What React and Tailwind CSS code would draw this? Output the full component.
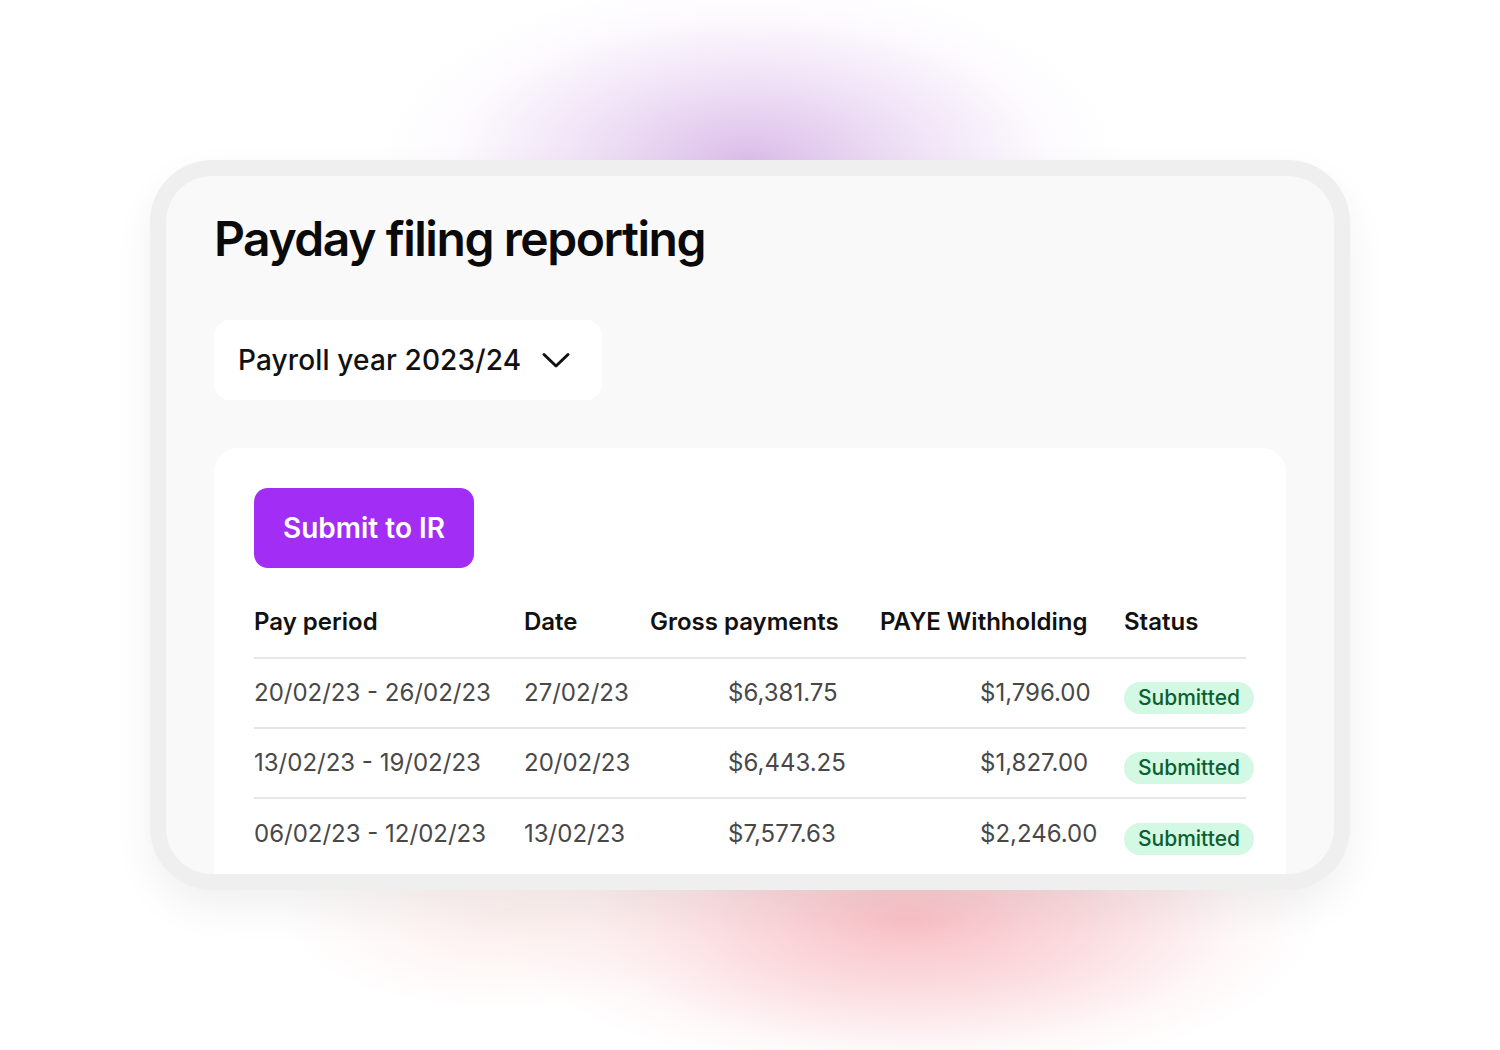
const rows = [
  { period: '20/02/23 - 26/02/23', date: '27/02/23', gross: '$6,381.75', paye: '$1,796.00' },
  { period: '13/02/23 - 19/02/23', date: '20/02/23', gross: '$6,443.25', paye: '$1,827.00' },
  { period: '06/02/23 - 12/02/23', date: '13/02/23', gross: '$7,577.63', paye: '$2,246.00' },
];

function Chevron() {
  return (
    <svg width="30" height="30" viewBox="0 0 30 30" fill="none">
      <path d="M3 9.5 L15 21 L27 9.5" stroke="#111" strokeWidth="3" strokeLinecap="round" strokeLinejoin="round" />
    </svg>
  );
}

export default function App() {
  return (
    <div className="relative w-full h-[1050px] overflow-hidden bg-white font-['Inter','Liberation_Sans',sans-serif]">
      {/* glows */}
      <div className="absolute left-[380px] top-[-20px] w-[740px] h-[360px] bg-[radial-gradient(closest-side,rgba(175,110,205,0.45),rgba(195,140,220,0.25)_45%,rgba(225,195,240,0.08)_80%,rgba(255,255,255,0))]" />
      <div className="absolute left-[500px] top-[760px] w-[820px] h-[320px] bg-[radial-gradient(closest-side,rgba(246,165,174,0.7),rgba(246,180,188,0.45)_45%,rgba(248,205,210,0.15)_80%,rgba(255,255,255,0))]" />
      <div className="absolute left-[280px] top-[830px] w-[440px] h-[180px] bg-[radial-gradient(closest-side,rgba(246,210,205,0.35),rgba(255,255,255,0))]" />

      {/* frame */}
      <div className="relative ml-[150px] mt-[160px] w-[1200px] h-[730px] rounded-[62px] bg-[#efefef] p-4 shadow-[0_18px_40px_rgba(0,0,0,0.06)]">
        <div className="h-full rounded-[46px] bg-[#f9f9f9] overflow-hidden pl-12 pr-12 pt-[39px]">
          <h1 className="text-[48px] leading-[48px] font-semibold tracking-[-0.03em] text-[#0a0a0a]">
            Payday filing reporting
          </h1>

          <div className="mt-[57px] w-[388px] h-20 rounded-2xl bg-white flex items-center pl-6 gap-5">
            <span className="text-[28px] font-medium text-[#111] tracking-[0.005em]">Payroll year 2023/24</span>
            <Chevron />
          </div>

          <div className="mt-12 rounded-t-[24px] bg-white p-10 pb-0 h-[500px]">
            <button className="w-[220px] h-20 rounded-[14px] bg-[#a22ef5] text-white text-[28px] font-semibold">
              Submit to IR
            </button>

            <div className="mt-[39px] grid grid-cols-[270px_126px_230px_244px_1fr] text-[24px] font-semibold text-[#111] leading-[30px] pb-5 border-b-2 border-[#e6e6e6]">
              <div>Pay period</div>
              <div>Date</div>
              <div>Gross payments</div>
              <div>PAYE Withholding</div>
              <div>Status</div>
            </div>

            {rows.map((r, i) => (
              <div
                key={i}
                className={`grid grid-cols-[270px_126px_230px_244px_1fr] items-center h-[70px] text-[24px] text-[#484848] ${
                  i < rows.length - 1 ? 'border-b-2 border-[#e6e6e6]' : ''
                }`}
              >
                <div>{r.period}</div>
                <div>{r.date}</div>
                <div className="pl-[78px]">{r.gross}</div>
                <div className="pl-[100px]">{r.paye}</div>
                <div className="pt-2">
                  <span className="inline-flex items-center h-8 px-[14px] rounded-full bg-[#d3f8e3] text-[#0a5f2f] text-[21px] font-medium whitespace-nowrap">
                    Submitted
                  </span>
                </div>
              </div>
            ))}
          </div>
        </div>
      </div>
    </div>
  );
}
